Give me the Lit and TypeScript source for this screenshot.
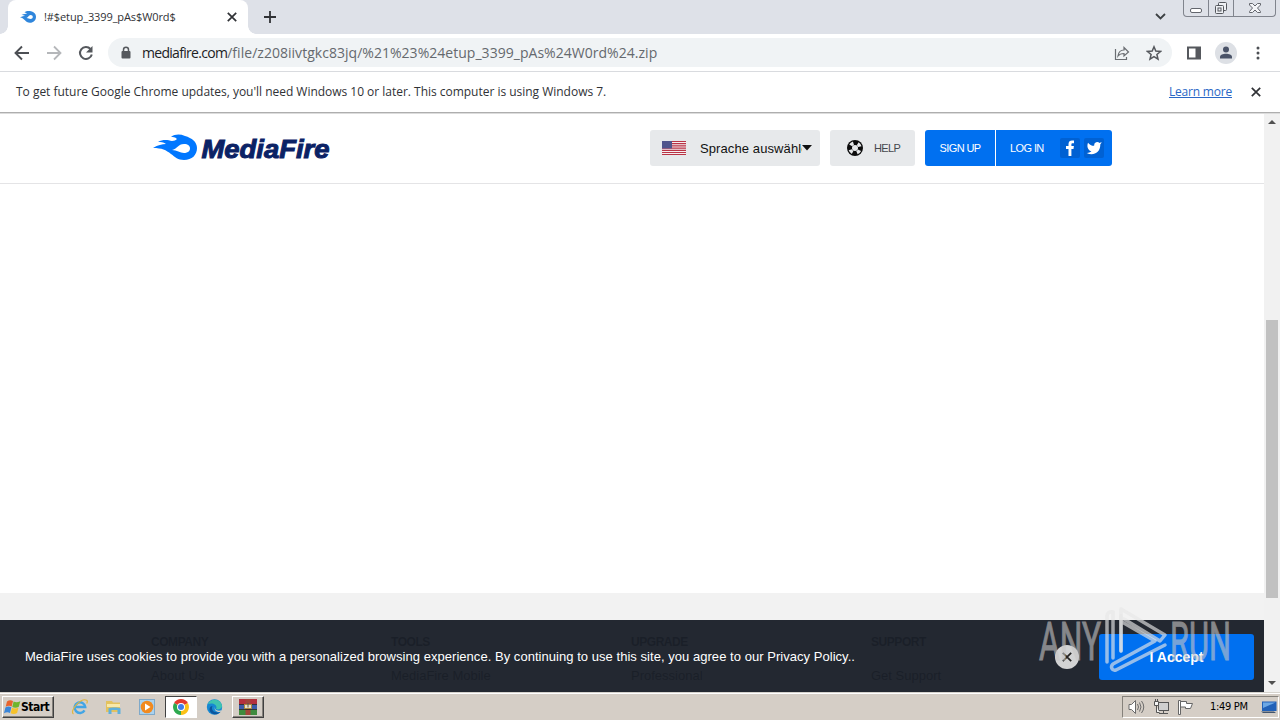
import { LitElement, html, css, svg } from "lit";
import { customElement } from "lit/decorators.js";

const closeIcon = html`<svg width="10" height="10" viewBox="0 0 10 10">
  <path d="M.8.8l8.400 8.400M9.200.8L.8 9.200" fill="none" stroke="currentColor" stroke-width="1.700" />
</svg>`;

const flame = svg`
  <path
    d="M0 14c5-3 9-4 13-4-3-2-5-2-8-2 5-3 10-2 14-1 2 0 4-1 5-2-2-2-4-2-6-2 4-3 9-3 14-1 7 2 12 6 12 12 0 7-5 12-13 12-6 0-9-3-13-6-5-4-9-6-18-6z"
    fill="#0077ff"
  />
  <path d="M19 16c5-1 6-6 12-6 4 0 6 2 6 4.500 0 3-3 4.500-6 4.500-4 0-7-3-12-3z" fill="#fff" />
`;

@customElement("browser-chrome")
export class BrowserChrome extends LitElement {
  static styles = css`
    :host {
      display: flex;
      flex-direction: column;
      height: 114px;
      box-sizing: border-box;
      background: #fff;
      border-bottom: 1px solid #dcdcdc;
      font-family: "Open Sans", sans-serif;
      color: #303236;
      white-space: nowrap;
    }

    svg {
      display: block;
      flex: none;
    }

    .tabs {
      display: flex;
      height: 34px;
      background: #dee1e8;
      padding-left: 8px;
    }

    .tab {
      position: relative;
      display: flex;
      align-items: center;
      width: 240px;
      height: 34px;
      box-sizing: border-box;
      padding: 0 11px 0 12px;
      background: #fff;
      border-radius: 8px 8px 0 0;
      font-size: 11px;
    }

    .tab::before,
    .tab::after {
      content: "";
      position: absolute;
      bottom: 0;
      width: 8px;
      height: 8px;
    }

    .tab::before {
      left: -8px;
      background: radial-gradient(circle at 0 0, #dee1e8 7.5px, #fff 8px);
    }

    .tab::after {
      right: -8px;
      background: radial-gradient(circle at 100% 0, #dee1e8 7.5px, #fff 8px);
    }

    .tab-title {
      flex: 1;
      margin: 0 0 2px 8px;
      letter-spacing: -0.1px;
    }

    .new-tab {
      margin: 11px 0 0 16px;
    }

    .chevron {
      margin: 13px 17px 0 auto;
    }

    .window-buttons {
      display: flex;
      width: 91px;
      height: 16px;
      margin-right: 4px;
      border: 1px solid #80848d;
      border-top: 0;
      border-radius: 0 0 4px 4px;
    }

    .window-buttons span {
      display: flex;
      justify-content: center;
      width: 24px;
      border-right: 1px solid #80848d;
    }

    .window-buttons span:last-child {
      flex: 1;
      border-right: 0;
    }

    .toolbar {
      display: flex;
      align-items: center;
      height: 37px;
      border-bottom: 1px solid #d9dbdf;
      color: #55585d;
    }

    .nav {
      display: flex;
      gap: 16px;
      padding-left: 14px;
    }

    .address {
      display: flex;
      align-items: center;
      width: 1064px;
      height: 29px;
      margin-left: 14px;
      box-sizing: border-box;
      padding: 0 10px 0 12px;
      border-radius: 15px;
      background: #f0f3f5;
    }

    .url {
      flex: 1;
      margin-left: 10px;
      font-size: 14px;
      letter-spacing: 0.03px;
      color: #65696e;
    }

    .url b {
      font-weight: 400;
      letter-spacing: -0.7px;
      color: #202124;
    }

    .share {
      margin-right: 16px;
    }

    .panel {
      margin: 0 13px 0 14px;
    }

    .menu {
      margin-left: 13px;
    }

    .notice {
      display: flex;
      align-items: center;
      height: 40px;
      padding: 0 19px 0 16px;
      border-bottom: 1px solid #aeaeae;
      font-size: 12px;
      letter-spacing: -0.02px;
    }

    .notice-text {
      flex: 1;
      margin-bottom: 2px;
    }

    .learn {
      margin: 0 19px 2px 0;
      letter-spacing: -0.2px;
      color: #2a67c6;
      text-decoration: underline;
    }
  `;

  render() {
    return html`
      <div class="tabs">
        <div class="tab">
          <svg width="16" height="12" viewBox="0 0 16 12">
            <path
              d="M0 6.500C2 5 4 5 5 5 4 4 2.500 4 1.500 4 4 2.500 6 3 7 2.500 6 1.500 5 1.500 4.500 1.200 6 0 9-.2 11 .3c3 .6 5 2.700 5 5.500 0 3.500-2.500 6-6 6C5 11.800 5 7 0 6.500z"
              fill="#2f86dc"
            />
            <path d="M6.500 7c2-.5 2-3 4-3 1.500 0 2.300.9 2.300 2s-1 2-2.300 2c-1.500 0-2-.8-4-1z" fill="#fff" />
          </svg>
          <span class="tab-title">!#$etup_3399_pAs$W0rd$</span>
          ${closeIcon}
        </div>
        <svg class="new-tab" width="12" height="12" viewBox="0 0 12 12">
          <path d="M6 0v12M0 6h12" stroke="#303236" stroke-width="1.800" />
        </svg>
        <svg class="chevron" width="11" height="8" viewBox="0 0 11 8">
          <path d="M1 1l4.500 4.500L10 1" fill="none" stroke="#3c4043" stroke-width="1.800" />
        </svg>
        <div class="window-buttons">
          <span
            ><svg width="24" height="16" viewBox="0 0 24 16">
              <rect x="6.500" y="8.500" width="11" height="4" rx="1.500" fill="#fff" stroke="#63666d" /></svg
          ></span>
          <span
            ><svg width="24" height="16" viewBox="0 0 24 16">
              <g fill="#eef0f4" stroke="#54575d">
                <rect x="9.500" y="2.500" width="8" height="8" rx="1" />
                <rect x="6.500" y="5.500" width="8" height="8" rx="1" />
                <rect x="9" y="8" width="3" height="3" />
              </g></svg
          ></span>
          <span
            ><svg width="40" height="16" viewBox="0 0 40 16">
              <path
                d="M14.500 3.500h3l2.500 2.500 2.500-2.500h3v1.500L22.500 8l3 3.500v1h-3L20 10l-2.500 2.500h-3v-1l3-3.500-3-3z"
                fill="#f4f5f8"
                stroke="#63666d"
              /></svg
          ></span>
        </div>
      </div>
      <div class="toolbar">
        <div class="nav">
          <svg width="16" height="16" viewBox="0 0 16 16">
            <path d="M15 8H2M8 1.500L1.500 8 8 14.500" fill="none" stroke="#4c4f54" stroke-width="1.900" />
          </svg>
          <svg width="16" height="16" viewBox="0 0 16 16">
            <path d="M1 8h13M8 1.500L14.500 8 8 14.500" fill="none" stroke="#b5b7ba" stroke-width="1.800" />
          </svg>
          <svg width="16" height="16" viewBox="0 0 16 16">
            <path d="M13.800 9.500A6 6 0 1 1 12.500 4" fill="none" stroke="#55585d" stroke-width="2" />
            <path d="M14.500 1v6.500H8z" fill="#55585d" />
          </svg>
        </div>
        <div class="address">
          <svg width="12" height="14" viewBox="0 0 12 14">
            <path d="M3.500 6V3.800a2.500 2.500 0 0 1 5 0V6" fill="none" stroke="#55585d" stroke-width="1.500" />
            <rect x="1.500" y="5" width="9" height="7.500" rx="1" fill="#55585d" />
          </svg>
          <span class="url"
            ><b>mediafire.com</b>/file/z208iivtgkc83jq/%21%23%24etup_3399_pAs%24W0rd%24.zip</span
          >
          <svg class="share" width="16" height="16" viewBox="0 0 16 16" fill="none" stroke="#6a6d72" stroke-width="1.200">
            <path d="M1.500 4v10.500h11V12" />
            <path d="M4 11c.5-4 2.500-6 6-6V2.500L14.500 7 10 11V8.500C7.500 8.500 5.500 9 4 11z" />
          </svg>
          <svg width="16" height="16" viewBox="0 0 16 16">
            <path
              d="M8 1.800l1.800 4.300 4.700.4-3.600 3 1.100 4.600L8 11.600l-4 2.500 1.100-4.600-3.600-3 4.700-.4z"
              fill="none"
              stroke="#55585d"
              stroke-width="1.500"
            />
          </svg>
        </div>
        <svg class="panel" width="16" height="16" viewBox="0 0 16 16">
          <path d="M1 1.500h14v13H1z" fill="#55585d" />
          <path d="M3 3.500h6.500v9H3z" fill="#fff" />
        </svg>
        <svg width="22" height="22" viewBox="0 0 22 22">
          <circle cx="11" cy="11" r="11" fill="#dde0e5" />
          <circle cx="11" cy="7.500" r="3" fill="#4a5368" />
          <path d="M5 16.500v-1.500c0-2 3-3.200 6-3.200s6 1.200 6 3.200v1.500z" fill="#4a5368" />
        </svg>
        <svg class="menu" width="16" height="16" viewBox="0 0 16 16" fill="#4c4f54">
          <circle cx="8" cy="3" r="1.500" />
          <circle cx="8" cy="8" r="1.500" />
          <circle cx="8" cy="13" r="1.500" />
        </svg>
      </div>
      <div class="notice">
        <span class="notice-text"
          >To get future Google Chrome updates, you'll need Windows 10 or later. This computer is
          using Windows 7.</span
        >
        <span class="learn">Learn more</span>
        ${closeIcon}
      </div>
    `;
  }
}

@customElement("site-header")
export class SiteHeader extends LitElement {
  static styles = css`
    :host {
      display: flex;
      height: 70px;
      box-sizing: border-box;
      padding: 16px 0 0 153px;
      border-bottom: 1px solid #e4e4e6;
      font-family: "Liberation Sans", Arial, sans-serif;
      white-space: nowrap;
    }

    svg {
      display: block;
      flex: none;
    }

    .logo {
      margin-top: 4px;
    }

    .logo text {
      font: italic 700 26px "Liberation Sans", Arial, sans-serif;
      fill: #0b2265;
      stroke: #0b2265;
      stroke-width: 1;
    }

    .actions {
      display: flex;
      gap: 10px;
      margin-left: 319px;
    }

    .button {
      display: flex;
      align-items: center;
      height: 36px;
      box-sizing: border-box;
      border-radius: 3px;
      background: #e7e9eb;
      font-size: 11px;
      letter-spacing: -0.6px;
      color: #45474c;
    }

    .language {
      width: 170px;
      padding: 0 7px 0 12px;
      font-size: 13px;
      letter-spacing: 0.1px;
      color: #111;
    }

    .language span {
      width: 102px;
      margin-left: 14px;
      overflow: hidden;
    }

    .help {
      width: 85px;
      padding-left: 17px;
      gap: 11px;
    }

    .account {
      display: flex;
    }

    .signup,
    .login {
      background: #0070f0;
      color: #fff;
    }

    .signup {
      width: 70px;
      justify-content: center;
      border-radius: 3px 0 0 3px;
    }

    .login {
      width: 116px;
      margin-left: 1px;
      padding-left: 14px;
      border-radius: 0 3px 3px 0;
    }

    .facebook {
      margin: 0 4px 0 auto;
    }

    .twitter {
      margin-right: 8px;
    }
  `;

  render() {
    return html`
      <svg class="logo" width="178" height="30" viewBox="0 0 178 30">
        ${flame}
        <text x="48.500" y="24" textLength="128" lengthAdjust="spacingAndGlyphs">MediaFire</text>
      </svg>
      <div class="actions">
        <div class="button language">
          <svg width="24" height="14" viewBox="0 0 24 14">
            <rect width="24" height="14" fill="#f5eef0" />
            <path d="M0 .5h24M0 2.700h24M0 4.900h24M0 7.100h24M0 9.300h24M0 11.500h24M0 13.500h24" stroke="#b93345" stroke-width="1.200" />
            <rect width="10" height="7.500" fill="#50558c" />
          </svg>
          <span>Sprache auswählen</span>
          <svg width="10" height="6" viewBox="0 0 10 6"><path d="M0 0h10L5 5.500z" fill="#111" /></svg>
        </div>
        <div class="button help">
          <svg width="16" height="16" viewBox="0 0 16 16">
            <circle cx="8" cy="8" r="8" fill="#0c0c0c" />
            <circle cx="8" cy="8" r="5" fill="none" stroke="#e7e9eb" stroke-width="3.500" stroke-dasharray="3.400 4.450" stroke-dashoffset="-2.250" />
            <circle cx="8" cy="8" r="3" fill="#e7e9eb" />
          </svg>
          <span>HELP</span>
        </div>
        <div class="account">
          <div class="button signup">SIGN UP</div>
          <div class="button login">
            LOG IN
            <svg class="facebook" width="20" height="20" viewBox="0 0 20 20">
              <rect width="20" height="20" rx="2" fill="#0061d3" />
              <path d="M8.500 18v-7H6V8h2.500V6c0-2.500 1.500-3.500 3.500-3.500h2v2.800h-1.300c-1 0-1.300.5-1.300 1.200V8h2.500l-.4 3h-2.100v7z" fill="#fff" />
            </svg>
            <svg class="twitter" width="20" height="20" viewBox="0 0 20 20">
              <rect width="20" height="20" rx="2" fill="#0061d3" />
              <path
                transform="translate(2 2) scale(.68)"
                d="M23 3a10.900 10.900 0 0 1-3.140 1.530A4.480 4.480 0 0 0 12 7.530v1A10.660 10.660 0 0 1 3 4s-4 9 5 13a11.640 11.640 0 0 1-7 2c9 5 20 0 20-11.500 0-.28 0-.56-.08-.83A7.720 7.720 0 0 0 23 3z"
                fill="#fff"
              />
            </svg>
          </div>
        </div>
      </div>
    `;
  }
}

@customElement("site-footer")
export class SiteFooter extends LitElement {
  static styles = css`
    :host {
      position: relative;
      display: block;
      height: 99px;
      overflow: hidden;
      background: #f2f2f2;
      font-family: "Liberation Sans", Arial, sans-serif;
      white-space: nowrap;
    }

    .columns {
      display: grid;
      grid-template-columns: repeat(4, 240px);
      padding: 42px 0 0 151px;
      font-size: 13px;
      line-height: 15px;
      color: #111;
    }

    .columns b {
      display: block;
      margin-bottom: 18px;
      font-size: 12px;
      letter-spacing: -0.45px;
    }

    .cookies {
      position: absolute;
      inset: 27px 0 0;
      display: flex;
      align-items: center;
      padding: 0 10px 0 25px;
      background: rgba(27, 32, 41, 0.965);
      color: #fff;
      font-size: 13px;
    }

    .message {
      letter-spacing: 0.04px;
    }

    .dismiss {
      display: flex;
      align-items: center;
      justify-content: center;
      width: 24px;
      height: 24px;
      margin: 2px 20px 0 auto;
      border-radius: 50%;
      background: #d2d3d4;
      color: #222;
    }

    .accept {
      width: 155px;
      height: 46px;
      margin-top: 1px;
      border-radius: 3px;
      background: #0070f0;
      font-size: 14px;
      font-weight: 700;
      line-height: 47px;
      text-align: center;
    }
  `;

  columns = [
    ["COMPANY", "About Us"],
    ["TOOLS", "MediaFire Mobile"],
    ["UPGRADE", "Professional"],
    ["SUPPORT", "Get Support"],
  ];

  render() {
    return html`
      <div class="columns">
        ${this.columns.map(([title, link]) => html`<div><b>${title}</b>${link}</div>`)}
      </div>
      <div class="cookies">
        <span class="message"
          >MediaFire uses cookies to provide you with a personalized browsing experience. By
          continuing to use this site, you agree to our Privacy Policy..</span
        >
        <span class="dismiss">${closeIcon}</span>
        <div class="accept">I Accept</div>
      </div>
    `;
  }
}

@customElement("task-bar")
export class TaskBar extends LitElement {
  static styles = css`
    :host {
      display: flex;
      align-items: center;
      height: 28px;
      box-sizing: border-box;
      padding: 0 1px 0 2px;
      border-top: 1px solid #d6d3cd;
      box-shadow: inset 0 1px #fff;
      background: #d5cec6;
      font-family: "DejaVu Sans Condensed", "DejaVu Sans", sans-serif;
      font-size: 11px;
      color: #000;
      white-space: nowrap;
    }

    svg {
      display: block;
      flex: none;
    }

    .start,
    .raised,
    .pressed {
      display: flex;
      align-items: center;
      height: 22px;
      box-sizing: border-box;
      border: 1px solid;
      border-color: #fff #404040 #404040 #fff;
      box-shadow: inset -1px -1px #85817b;
    }

    .start {
      width: 52px;
      padding-left: 1px;
      font-size: 12px;
      font-weight: 700;
      letter-spacing: -0.5px;
    }

    .apps {
      display: flex;
      align-items: center;
      margin-left: 17px;
    }

    .raised,
    .pressed {
      justify-content: center;
      width: 32px;
    }

    .pressed {
      border-color: #404040 #fff #fff #404040;
      box-shadow: none;
      background: #fff;
    }

    .explorer {
      margin: 0 17px;
    }

    .player {
      margin-right: 10px;
    }

    .edge {
      margin: 0 9px;
    }

    .tray {
      display: flex;
      align-items: center;
      width: 157px;
      height: 22px;
      box-sizing: border-box;
      margin-left: auto;
      padding: 0 2px 0 5px;
      border: 1px solid;
      border-color: #85817b #fff #fff #85817b;
      gap: 8px;
    }

    .time {
      margin: 0 5px 0 8px;
      letter-spacing: -0.3px;
    }
  `;

  render() {
    return html`
      <div class="start">
        <svg width="17" height="16" viewBox="0 0 17 16">
          <path d="M3 2.500c2-1.500 4-1.500 6-.5L7.700 7.500c-2-1-4-.8-6 .3z" fill="#e8632d" />
          <path d="M9.600 2.500c2 1 4 1 6.700-.3l-1.500 5.500c-2 1.200-4.500 1.200-6.500.2z" fill="#6fb52c" />
          <path d="M1.400 8.500c2-1.200 4-1.200 6-.2L6 14c-2-1-4-.8-6 .3z" fill="#3a85d8" />
          <path d="M8 8.700c2 1 4.500 1 6.500-.2l-1.400 5.500c-2 1.200-4.500 1.200-6.500.2z" fill="#f6c22b" />
        </svg>
        Start
      </div>
      <div class="apps">
        <svg width="17" height="16" viewBox="0 0 17 16">
          <path d="M13.500 11.300a5.300 5.300 0 1 1 .7-3.300H5" fill="none" stroke="#42a5e5" stroke-width="2.500" />
          <path d="M2.500 15C-2 12 10-1.500 15.700 1.200c1 .8.500 2.300 0 3.300" fill="none" stroke="#e0b640" stroke-width="1.200" />
        </svg>
        <svg class="explorer" width="17" height="16" viewBox="0 0 17 16">
          <path d="M1 2h6l1 1.500h7V13H1z" fill="#e3c25f" />
          <path d="M2 5h13v3H2z" fill="#f8e9a9" />
          <path d="M3.500 15V9.500C3.500 8 15.500 8 15.500 9.500V15h-3v-4h-6v4z" fill="#5fb0dc" />
        </svg>
        <svg class="player" width="16" height="16" viewBox="0 0 16 16">
          <rect x=".5" y=".5" width="15" height="15" fill="#a9d2f0" stroke="#7fa9c9" />
          <circle cx="8" cy="8" r="6.300" fill="#f18a20" />
          <path d="M6 4.500v7L11.500 8z" fill="#fff" />
        </svg>
        <div class="pressed">
          <svg width="16" height="16" viewBox="0 0 16 16">
            <path d="M8 8L1.100 4A8 8 0 0 1 14.900 4z" fill="#e33b2e" />
            <path d="M8 8l6.900-4A8 8 0 0 1 8 16z" fill="#fbc116" />
            <path d="M8 8v8A8 8 0 0 1 1.100 4z" fill="#2da94f" />
            <circle cx="8" cy="8" r="4" fill="#fff" />
            <circle cx="8" cy="8" r="3" fill="#3f7de8" />
          </svg>
        </div>
        <svg class="edge" width="17" height="16" viewBox="0 0 17 16">
          <circle cx="8.500" cy="8" r="7.700" fill="#1688d2" />
          <path d="M2 5C4-1 15-1 16 7c.3 3-4 4-6 3 2-3-2-7-8-5z" fill="#3fc3b0" />
          <path d="M6.500 7c-2 4 2 8 8 6C10 17.500 4 15 3.500 10.500 3.500 8 5 7 6.500 7z" fill="#0c569f" />
          <path d="M9 7.500c-1 3 2 5 6.500 3.800l-.7 1.500C11 14 7.500 11 9 7.500z" fill="#d5cec6" />
        </svg>
        <div class="raised">
          <svg width="18" height="16" viewBox="0 0 18 16">
            <path d="M0 0h18v5.500H0z" fill="#b3303d" />
            <path d="M0 5.500h18v5H0z" fill="#3b5ba8" />
            <path d="M0 10.500h18V16H0z" fill="#3f8b3d" />
            <path d="M6.500 0h5v16h-5z" fill="#a2453a" />
            <path d="M0 5.500h18M0 10.500h18" stroke="#222" stroke-width=".8" />
            <rect x="5.500" y="5.500" width="7" height="4" fill="#e9dfc6" stroke="#a98a40" />
            <path d="M9 4v4.500" stroke="#555" />
          </svg>
        </div>
      </div>
      <div class="tray">
        <svg width="17" height="16" viewBox="0 0 17 16" fill="#fff" stroke="#6b6b6b">
          <path d="M1 5.500h2.500L7.500 1.500v13l-4-4H1z" />
          <path d="M9.500 5q2 3 0 6M11.500 3.500q3 4.500 0 9M13.500 2q4.500 6 0 12" fill="none" />
        </svg>
        <svg width="16" height="16" viewBox="0 0 16 16" fill="#f5f5f5" stroke="#555">
          <rect x="5.500" y="3.500" width="10" height="8" fill="#cfcfcf" />
          <path d="M6 14.500h9M10.500 12v2M1.500 2.500h4v4h-4zM2.500 0v2M4.500 0v2M3.500 7v6.500h3" />
        </svg>
        <svg width="17" height="16" viewBox="0 0 17 16" fill="#fff" stroke="#666">
          <path d="M1.500 1.500h2v14h-2z" />
          <path d="M3.500 2.500h6v2h6l-2 5H8.500v-1.500h-5z" />
        </svg>
        <span class="time">1:49 PM</span>
        <svg width="16" height="16" viewBox="0 0 16 16">
          <path d="M1 2.500h14.500v9.500H1z" fill="#2261b8" />
          <path d="M2 3.500h12.500L2 9z" fill="#6da8e5" />
          <path d="M0 12.500h13l2 1.500H2z" fill="#42556d" />
        </svg>
      </div>
    `;
  }
}

@customElement("app-root")
export class AppRoot extends LitElement {
  static styles = css`
    :host {
      position: relative;
      display: flex;
      flex-direction: column;
      width: 1280px;
      height: 720px;
      overflow: hidden;
      background: #fff;
    }

    .viewport {
      flex: 1;
      display: flex;
      min-height: 0;
    }

    .page {
      flex: 1;
      display: flex;
      flex-direction: column;
    }

    main {
      flex: 1;
    }

    .scrollbar {
      display: flex;
      flex-direction: column;
      align-items: center;
      width: 16px;
      box-sizing: border-box;
      padding: 6px 0 7px;
      background: #f1f1f1;
    }

    .thumb {
      width: 12px;
      height: 278px;
      margin: 196px 0 auto;
      background: #c1c1c1;
    }

    .watermark {
      position: absolute;
      left: 1034px;
      top: 604px;
    }

    .watermark text {
      font: 400 53px "Roboto", sans-serif;
      fill: #c8c6c6;
      stroke: #c8c6c6;
      stroke-width: 1;
      opacity: 0.6;
    }
  `;

  render() {
    return html`
      <browser-chrome></browser-chrome>
      <div class="viewport">
        <div class="page">
          <site-header></site-header>
          <main></main>
          <site-footer></site-footer>
        </div>
        <div class="scrollbar">
          <svg width="8" height="4" viewBox="0 0 8 4"><path d="M0 4h8L4 0z" fill="#505050" /></svg>
          <div class="thumb"></div>
          <svg width="8" height="4" viewBox="0 0 8 4"><path d="M0 0h8L4 4z" fill="#505050" /></svg>
        </div>
      </div>
      <task-bar></task-bar>
      <svg class="watermark" width="204" height="72" viewBox="0 0 204 72">
        <text x="5" y="56" textLength="62" lengthAdjust="spacingAndGlyphs">ANY</text>
        <text x="136" y="56" textLength="61" lengthAdjust="spacingAndGlyphs">RUN</text>
        <g fill="none" stroke="#e6e6e6" stroke-width="3.500" stroke-linecap="round" stroke-linejoin="round" stroke-opacity="0.650">
          <path d="M79 8c-3-1-6 1-6 4v46M79 8v46" />
          <path d="M87 47V5l44 26-5 6-36-22" />
          <path d="M87 47V12M131 41L82 66c-4 1-6-3-3-6l42-23-33-19" />
        </g>
      </svg>
    `;
  }
}
